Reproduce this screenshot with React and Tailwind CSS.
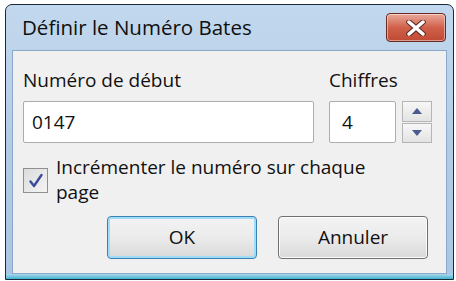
import React from "react"

const font = { fontFamily: '"Open Sans", "Noto Sans", "DejaVu Sans", sans-serif' }

function CloseButton() {
  return (
    <div className="flex h-[29px] w-[60px] items-center justify-center rounded-[4px] border border-[#6b2a20] bg-gradient-to-b from-[#e9a99a] via-[#d0604a] to-[#c04a33] shadow-[inset_0_0_0_1px_rgba(255,255,255,0.45)]">
      <svg width="22" height="16" viewBox="0 0 22 16">
        <path d="M4 2 L18 14 M18 2 L4 14" stroke="#5a2a22" strokeWidth="5.5" strokeLinecap="round" />
        <path d="M4 2 L18 14 M18 2 L4 14" stroke="#ffffff" strokeWidth="3.5" strokeLinecap="round" />
      </svg>
    </div>
  )
}

function Spinner() {
  return (
    <div className="ml-[6px] flex h-[42px] w-[30px] flex-col gap-[1px]">
      <div className="flex flex-1 items-center justify-center border border-[#b5b5b5] bg-gradient-to-b from-[#f7f7f7] to-[#e3e3e3]">
        <svg width="10" height="6" viewBox="0 0 10 6">
          <path d="M0 6 L5 0 L10 6 Z" fill="#4a5c8c" />
        </svg>
      </div>
      <div className="flex flex-1 items-center justify-center border border-[#b5b5b5] bg-gradient-to-b from-[#f7f7f7] to-[#e3e3e3]">
        <svg width="10" height="6" viewBox="0 0 10 6">
          <path d="M0 0 L10 0 L5 6 Z" fill="#4a5c8c" />
        </svg>
      </div>
    </div>
  )
}

function Button({ label, focused }) {
  return (
    <div
      className={
        "flex h-[43px] w-[150px] items-center justify-center rounded-[4px] border bg-gradient-to-b from-[#f3f3f3] via-[#ebebeb] to-[#d9d9d9] text-[19px] text-[#111] " +
        (focused
          ? "border-[#3c7fb1] shadow-[inset_0_0_0_2px_#9fdcf7]"
          : "border-[#707070] shadow-[inset_0_0_0_1px_#fcfcfc]")
      }
    >
      {label}
    </div>
  )
}

export default function App() {
  return (
    <div className="relative h-[281px] w-[456px] overflow-hidden bg-white" style={font}>
      <div className="ml-[5px] mt-[4px] flex h-[276px] w-[449px] flex-col rounded-t-[7px] border border-[#1c2836] bg-gradient-to-b from-[#c2d8ee] via-[#b3cce6] to-[#a9c6e4]">
        <div className="flex h-[45px] items-center justify-between pl-[16px] pr-[7px]">
          <span className="text-[20.5px] text-[#0f0f0f]">Définir le Numéro Bates</span>
          <CloseButton />
        </div>
        <div className="mx-[6px] flex flex-1 flex-col border border-[#8ba8c8] bg-[#f0f0f0] px-[10px] pt-[16px]">
          <div className="flex">
            <div className="flex flex-col">
              <span className="h-[34px] text-[19px] leading-[26px] text-[#111]">Numéro de début</span>
              <div className="flex h-[42px] w-[291px] items-center rounded-[2px] border border-[#abadb3] bg-white pl-[8px] text-[19px] text-[#111]">
                0147
              </div>
            </div>
            <div className="ml-[15px] flex flex-col">
              <span className="h-[34px] text-[19px] leading-[26px] text-[#111]">Chiffres</span>
              <div className="flex">
                <div className="flex h-[42px] w-[67px] items-center rounded-[2px] border border-[#abadb3] bg-white pl-[12px] text-[19px] text-[#111]">
                  4
                </div>
                <Spinner />
              </div>
            </div>
          </div>
          <div className="mt-[12px] flex items-start">
            <div className="mt-[13px] flex h-[25px] w-[25px] shrink-0 items-center justify-center border border-[#8f8f8f] bg-gradient-to-br from-[#dcdcdc] to-[#f4f4f4]">
              <svg width="16" height="16" viewBox="0 0 16 16">
                <path d="M2.5 8.5 L6 13 L13.5 2" fill="none" stroke="#3c4a9c" strokeWidth="2.4" strokeLinecap="round" strokeLinejoin="round" />
              </svg>
            </div>
            <span className="ml-[8px] w-[350px] text-[19px] leading-[25px] text-[#111]">
              Incrémenter le numéro sur chaque page
            </span>
          </div>
          <div className="mt-[11px] flex justify-end gap-[21px] pr-[8px]">
            <Button label="OK" focused />
            <Button label="Annuler" />
          </div>
        </div>
        <div className="h-[5px] bg-gradient-to-b from-[#a8d8ea] to-[#39b2d2]" />
      </div>
    </div>
  )
}
